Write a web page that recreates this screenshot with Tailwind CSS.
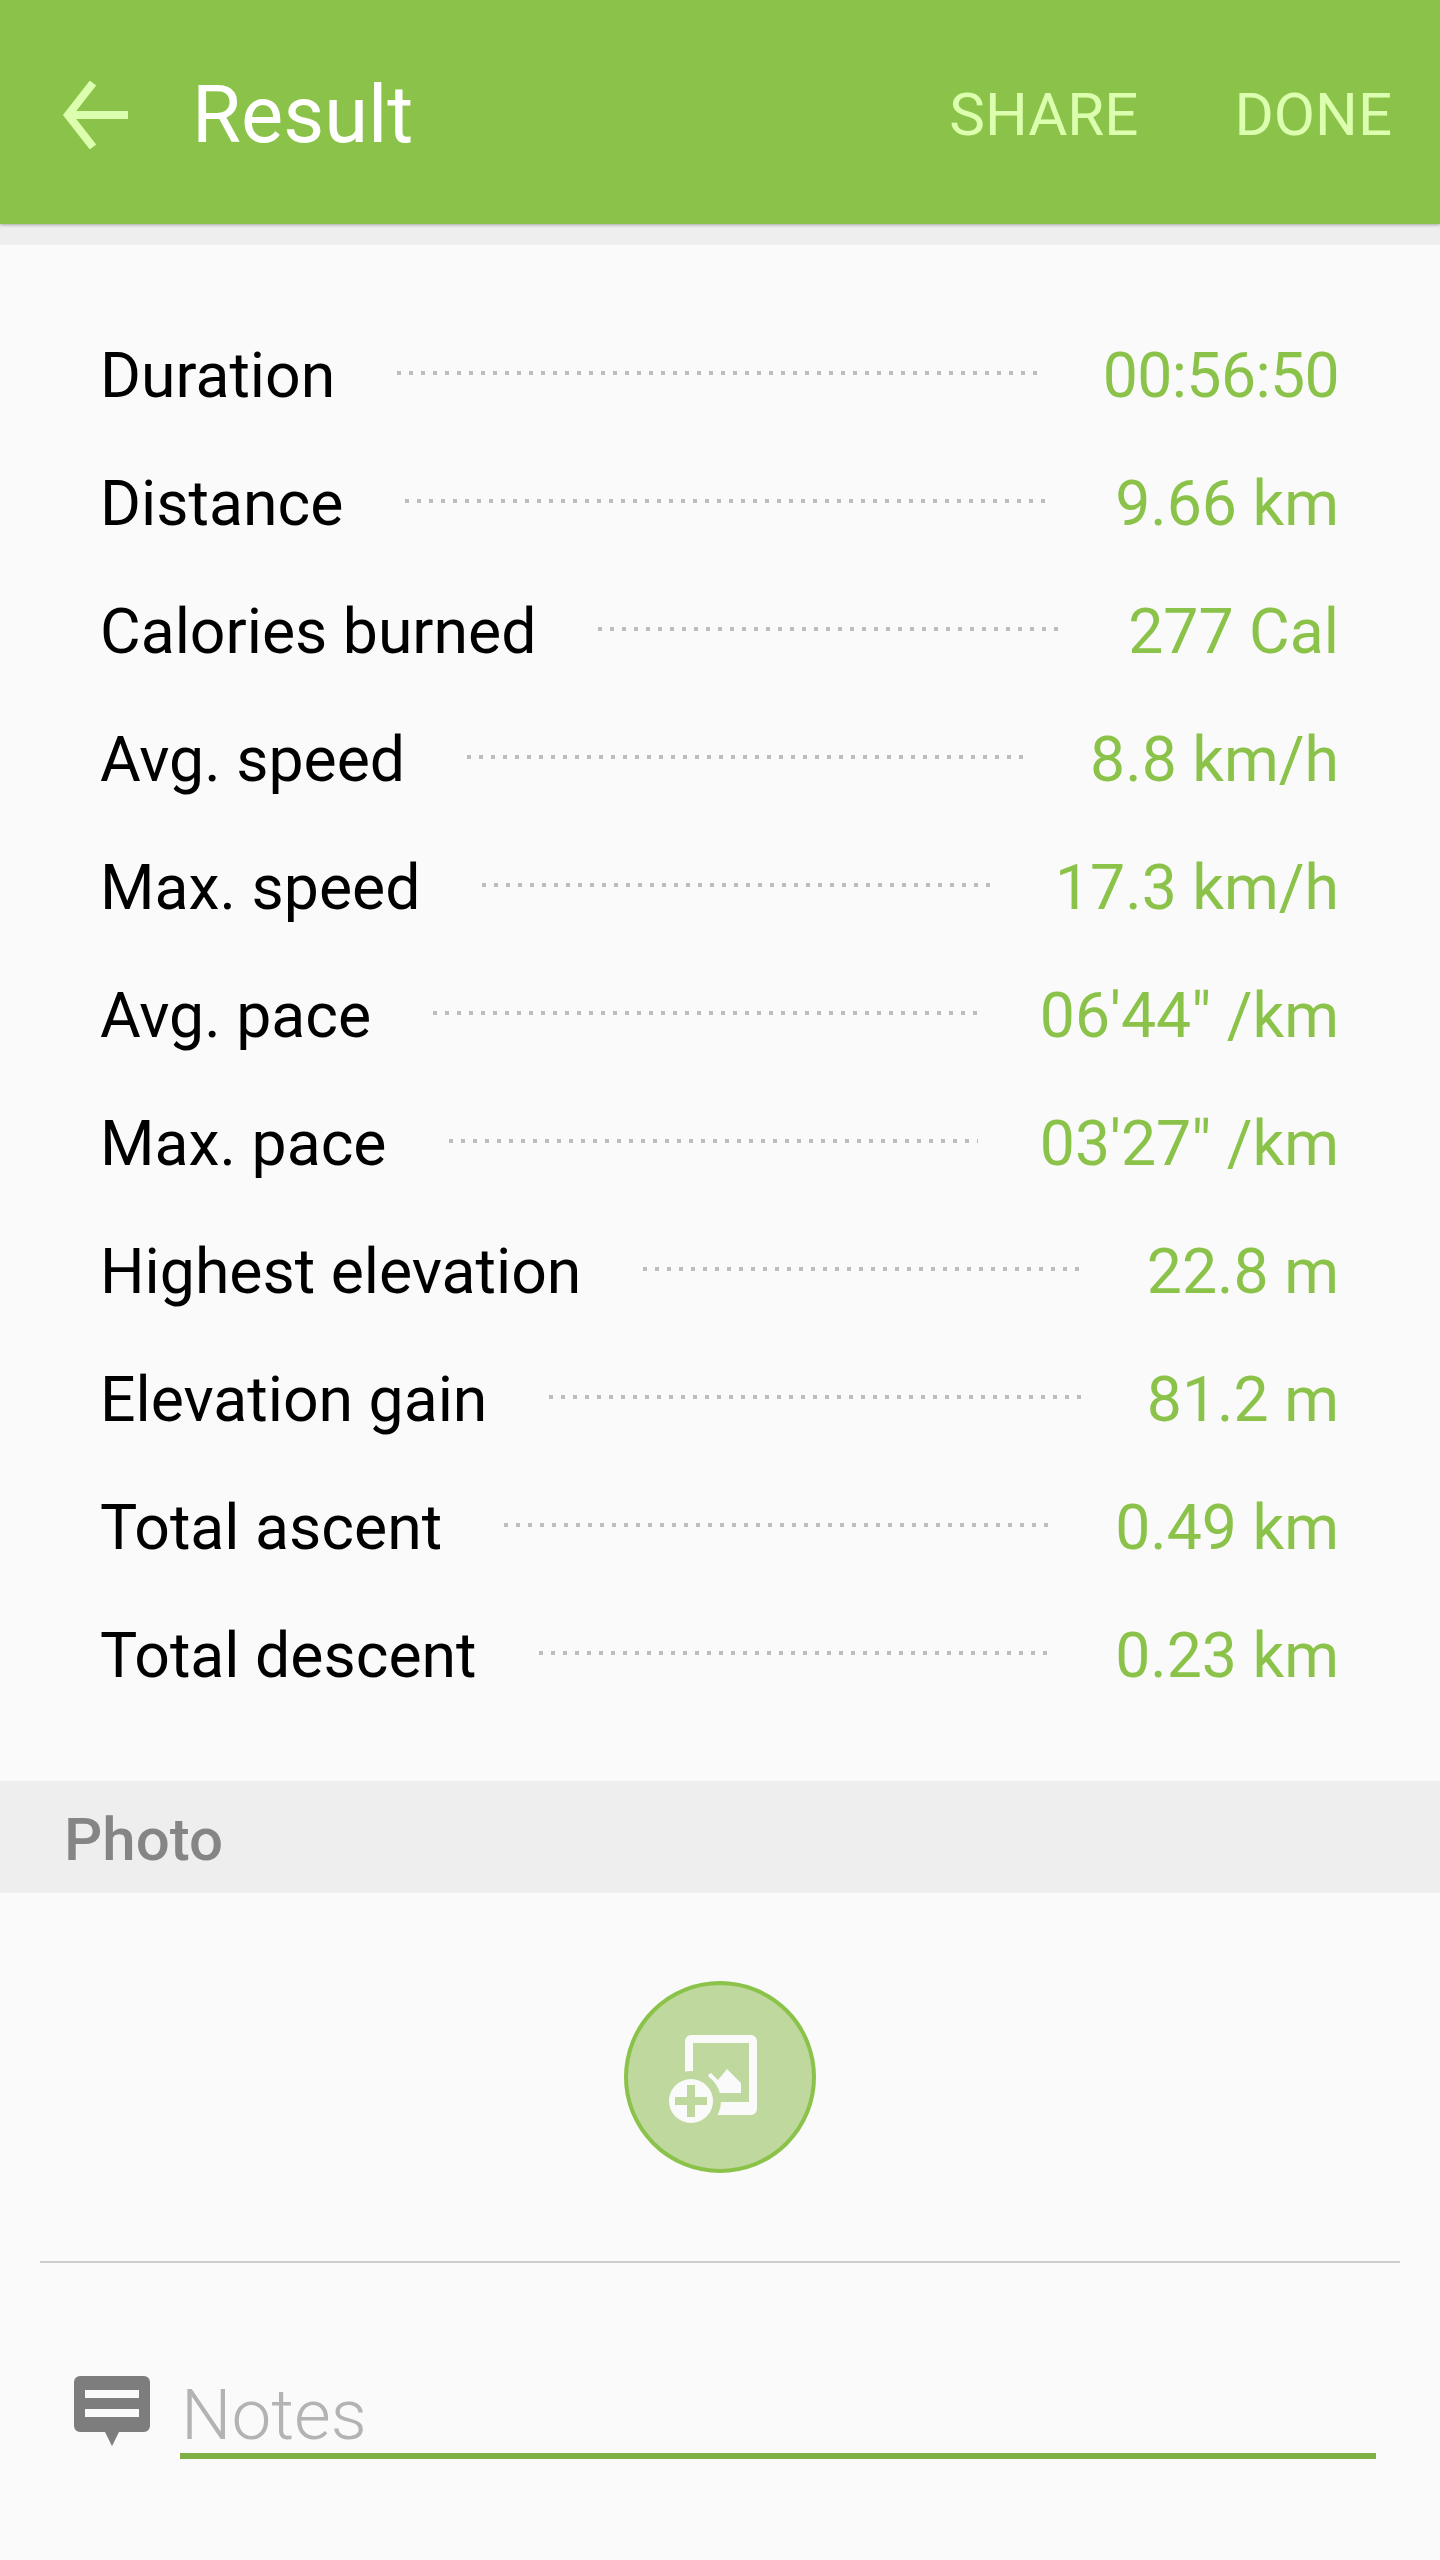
<!DOCTYPE html>
<html lang="en">

<head>
  <meta charset="UTF-8">
  <title>Result</title>
  <script src="https://cdn.jsdelivr.net/npm/@tailwindcss/browser@4"></script>
</head>

<body class="bg-[#fafafa] [font-family:Roboto,sans-serif] w-[1440px] h-[2560px] overflow-hidden flex flex-col">

  <!-- App bar -->
  <header class="h-[224px] shrink-0 bg-[#8bc34a] shadow-[0_1px_3px_rgba(0,0,0,0.3)] flex items-center pt-[6px] relative z-10">
    <svg class="ml-[62px] w-[68px] h-[68px]" viewBox="0 0 68 68" fill="none" stroke="#dcffaf" stroke-width="8">
      <path d="M66 34H6" />
      <path d="M31 2L6 34L31 66" />
    </svg>
    <h1 class="ml-[62px] text-[79.5px] font-normal text-white leading-none">Result</h1>
    <div class="ml-auto mr-[48px] flex gap-[96px] text-[60px] font-normal text-[#dcffaf] leading-none">
      <span>SHARE</span>
      <span>DONE</span>
    </div>
  </header>

  <div class="h-[21px] shrink-0 bg-[#eeeeee]"></div>

  <!-- Stats -->
  <section class="pt-[67px] pb-[61px] pl-[100px] pr-[101px] text-[62.5px] font-normal leading-none">
    <div class="h-[128px] flex items-center"><span class="text-black">Duration</span><span class="flex-1 mx-[62px] mb-[6px] h-1 bg-[repeating-linear-gradient(90deg,#bdbdbd_0,#bdbdbd_4px,transparent_4px,transparent_12px)]"></span><span class="text-[#8bc34a] tracking-[-0.6px]">00:56:50</span></div>
    <div class="h-[128px] flex items-center"><span class="text-black">Distance</span><span class="flex-1 mx-[62px] mb-[6px] h-1 bg-[repeating-linear-gradient(90deg,#bdbdbd_0,#bdbdbd_4px,transparent_4px,transparent_12px)]"></span><span class="text-[#8bc34a]">9.66 km</span></div>
    <div class="h-[128px] flex items-center"><span class="text-black">Calories burned</span><span class="flex-1 mx-[62px] mb-[6px] h-1 bg-[repeating-linear-gradient(90deg,#bdbdbd_0,#bdbdbd_4px,transparent_4px,transparent_12px)]"></span><span class="text-[#8bc34a]">277 Cal</span></div>
    <div class="h-[128px] flex items-center"><span class="text-black">Avg. speed</span><span class="flex-1 mx-[62px] mb-[6px] h-1 bg-[repeating-linear-gradient(90deg,#bdbdbd_0,#bdbdbd_4px,transparent_4px,transparent_12px)]"></span><span class="text-[#8bc34a]">8.8 km/h</span></div>
    <div class="h-[128px] flex items-center"><span class="text-black">Max. speed</span><span class="flex-1 mx-[62px] mb-[6px] h-1 bg-[repeating-linear-gradient(90deg,#bdbdbd_0,#bdbdbd_4px,transparent_4px,transparent_12px)]"></span><span class="text-[#8bc34a]">17.3 km/h</span></div>
    <div class="h-[128px] flex items-center"><span class="text-black">Avg. pace</span><span class="flex-1 mx-[62px] mb-[6px] h-1 bg-[repeating-linear-gradient(90deg,#bdbdbd_0,#bdbdbd_4px,transparent_4px,transparent_12px)]"></span><span class="text-[#8bc34a]">06'44" /km</span></div>
    <div class="h-[128px] flex items-center"><span class="text-black">Max. pace</span><span class="flex-1 mx-[62px] mb-[6px] h-1 bg-[repeating-linear-gradient(90deg,#bdbdbd_0,#bdbdbd_4px,transparent_4px,transparent_12px)]"></span><span class="text-[#8bc34a]">03'27" /km</span></div>
    <div class="h-[128px] flex items-center"><span class="text-black">Highest elevation</span><span class="flex-1 mx-[62px] mb-[6px] h-1 bg-[repeating-linear-gradient(90deg,#bdbdbd_0,#bdbdbd_4px,transparent_4px,transparent_12px)]"></span><span class="text-[#8bc34a]">22.8 m</span></div>
    <div class="h-[128px] flex items-center"><span class="text-black">Elevation gain</span><span class="flex-1 mx-[62px] mb-[6px] h-1 bg-[repeating-linear-gradient(90deg,#bdbdbd_0,#bdbdbd_4px,transparent_4px,transparent_12px)]"></span><span class="text-[#8bc34a]">81.2 m</span></div>
    <div class="h-[128px] flex items-center"><span class="text-black">Total ascent</span><span class="flex-1 mx-[62px] mb-[6px] h-1 bg-[repeating-linear-gradient(90deg,#bdbdbd_0,#bdbdbd_4px,transparent_4px,transparent_12px)]"></span><span class="text-[#8bc34a]">0.49 km</span></div>
    <div class="h-[128px] flex items-center"><span class="text-black">Total descent</span><span class="flex-1 mx-[62px] mb-[6px] h-1 bg-[repeating-linear-gradient(90deg,#bdbdbd_0,#bdbdbd_4px,transparent_4px,transparent_12px)]"></span><span class="text-[#8bc34a]">0.23 km</span></div>
  </section>

  <!-- Photo -->
  <div class="h-[112px] shrink-0 bg-[#eeeeee] pl-[64px] pt-[6px] flex items-center text-[60px] font-medium text-[#858585] leading-none">Photo</div>

  <div class="h-[368px] shrink-0 flex justify-center pt-[88px]">
    <div class="w-[192px] h-[192px] rounded-full border-4 border-[#8bc34a] bg-[#bfd89e]">
      <svg class="-m-1 w-[192px] h-[192px]" viewBox="0 0 192 192">
        <rect x="65" y="58" width="64" height="72" rx="2" fill="none" stroke="#fafafa" stroke-width="8" />
        <rect x="85" y="121" width="46" height="11" fill="#fafafa" />
        <polygon points="84,94 87,92 94,99 103,88 117,102 117,112 90,112" fill="#fafafa" />
        <circle cx="67" cy="120" r="30" fill="#bfd89e" />
        <circle cx="67" cy="120" r="22" fill="#fafafa" />
        <path d="M63 104h8v12h12v8H71v12h-8V124H51v-8h12z" fill="#bfd89e" />
      </svg>
    </div>
  </div>

  <div class="h-[2px] shrink-0 mx-[40px] bg-[#cccccc]"></div>

  <!-- Notes -->
  <div class="flex pl-[74px] pr-[64px] pt-[113px]">
    <svg class="w-[76px] h-[70px] shrink-0" viewBox="0 0 76 70">
      <path d="M6 0h64a6 6 0 0 1 6 6v44a6 6 0 0 1-6 6H45l-7 14-7-14H6a6 6 0 0 1-6-6V6a6 6 0 0 1 6-6z" fill="#7d7d7d" />
      <rect x="11" y="14" width="54" height="8" fill="#fafafa" />
      <rect x="11" y="33" width="54" height="8" fill="#fafafa" />
    </svg>
    <div class="flex-1 ml-[30px] h-[83px] border-b-[6px] border-[#7fb045] pl-[1px] text-[71px] font-light text-[#b3b3b3] leading-[78px]">Notes</div>
  </div>

</body>

</html>
